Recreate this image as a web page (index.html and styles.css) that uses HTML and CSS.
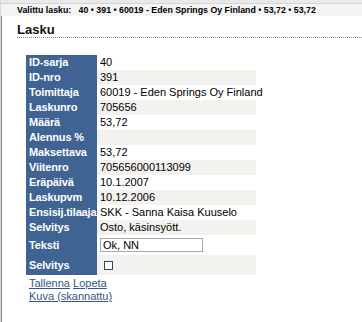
FILE: index.html
```html
<!DOCTYPE html>
<html lang="fi">
<head>
<meta charset="utf-8">
<title>Lasku</title>
<link rel="stylesheet" href="styles.css">
</head>
<body>
<div class="frame">
  <div class="topstrip"></div>
  <div class="selbar">Valittu lasku:&nbsp;&nbsp; 40 &bull; 391 &bull; 60019 - Eden Springs Oy Finland &bull; 53,72 &bull; 53,72</div>
  <h1 class="title">Lasku</h1>
  <table class="form">
    <colgroup><col class="c-label"><col class="c-value"></colgroup>
    <tr><td class="lbl">ID-sarja</td><td class="val">40</td></tr>
    <tr class="alt"><td class="lbl">ID-nro</td><td class="val">391</td></tr>
    <tr><td class="lbl">Toimittaja</td><td class="val">60019 - Eden Springs Oy Finland</td></tr>
    <tr class="alt"><td class="lbl">Laskunro</td><td class="val">705656</td></tr>
    <tr><td class="lbl">Määrä</td><td class="val">53,72</td></tr>
    <tr class="alt"><td class="lbl">Alennus %</td><td class="val"></td></tr>
    <tr><td class="lbl">Maksettava</td><td class="val">53,72</td></tr>
    <tr class="alt"><td class="lbl">Viitenro</td><td class="val">705656000113099</td></tr>
    <tr><td class="lbl">Eräpäivä</td><td class="val">10.1.2007</td></tr>
    <tr class="alt"><td class="lbl">Laskupvm</td><td class="val">10.12.2006</td></tr>
    <tr><td class="lbl">Ensisij.tilaaja</td><td class="val">SKK - Sanna Kaisa Kuuselo</td></tr>
    <tr class="alt"><td class="lbl">Selvitys</td><td class="val">Osto, käsinsyött.</td></tr>
    <tr class="tall"><td class="lbl">Teksti</td><td class="val"><input class="txt" type="text" value="Ok, NN"></td></tr>
    <tr class="alt tall"><td class="lbl">Selvitys</td><td class="val"><input class="chk" type="checkbox"></td></tr>
  </table>
  <div class="links">
    <div><a href="#">Tallenna</a> <a href="#">Lopeta</a></div>
    <div><a href="#">Kuva (skannattu)</a></div>
  </div>
</div>
</body>
</html>
```

FILE: styles.css
```css
html, body {
  margin: 0;
  padding: 0;
  background: #ffffff;
}

.frame {
  min-height: 322px;
  border-left: 1px solid #d8d8d8;
  box-shadow: inset 1px 0 0 #8c8c8c;
  font-family: "Liberation Sans", Arial, sans-serif;
  color: #000;
}

.topstrip {
  height: 3px;
  background: #e9e9e9;
}

.selbar {
  height: 12px;
  line-height: 12px;
  border-top: 1px solid #d4d4d4;
  background: #f4f4f4;
  padding-left: 16px;
  font-size: 8.8px;
  font-weight: bold;
  white-space: nowrap;
  overflow: hidden;
}

.title {
  margin: 6px 0 0 16px;
  padding: 0;
  font-size: 13px;
  line-height: 15px;
  font-weight: bold;
  color: #111;
  border-bottom: 1px dotted #8a8a8a;
}

.form {
  margin: 17px 0 0 25px;
  border-collapse: collapse;
  border-spacing: 0;
  table-layout: fixed;
  width: 230px;
}

.c-label { width: 71px; }
.c-value { width: 159px; }

.form td {
  height: 15px;
  padding: 0 0 0 3px;
  font-size: 11px;
  line-height: 13px;
  white-space: nowrap;
  vertical-align: middle;
}

.form tr.tall td {
  height: 20px;
}

.form td.lbl {
  background: #3f6392;
  color: #ffffff;
  font-weight: bold;
  letter-spacing: -0.15px;
  overflow: visible;
}

.form td.val {
  background: #ffffff;
  color: #000;
}

.form tr.alt td.val {
  background: #f4f2ef;
}

.txt {
  display: block;
  box-sizing: border-box;
  width: 103px;
  height: 14px;
  margin: 0;
  padding: 0 2px;
  border: 1px solid #a3a9ae;
  font-family: "Liberation Sans", Arial, sans-serif;
  font-size: 11px;
  line-height: 12px;
  color: #000;
  background: #fff;
}

.chk {
  -webkit-appearance: none;
  appearance: none;
  display: block;
  box-sizing: border-box;
  width: 9px;
  height: 9px;
  margin: 1px 0 0 4px;
  border: 1px solid #2a4868;
  background: #fff;
}

.links {
  margin: 2px 0 0 28px;
  font-size: 11px;
  line-height: 13px;
}

.links a {
  color: #36557f;
  text-decoration: underline;
}
```
